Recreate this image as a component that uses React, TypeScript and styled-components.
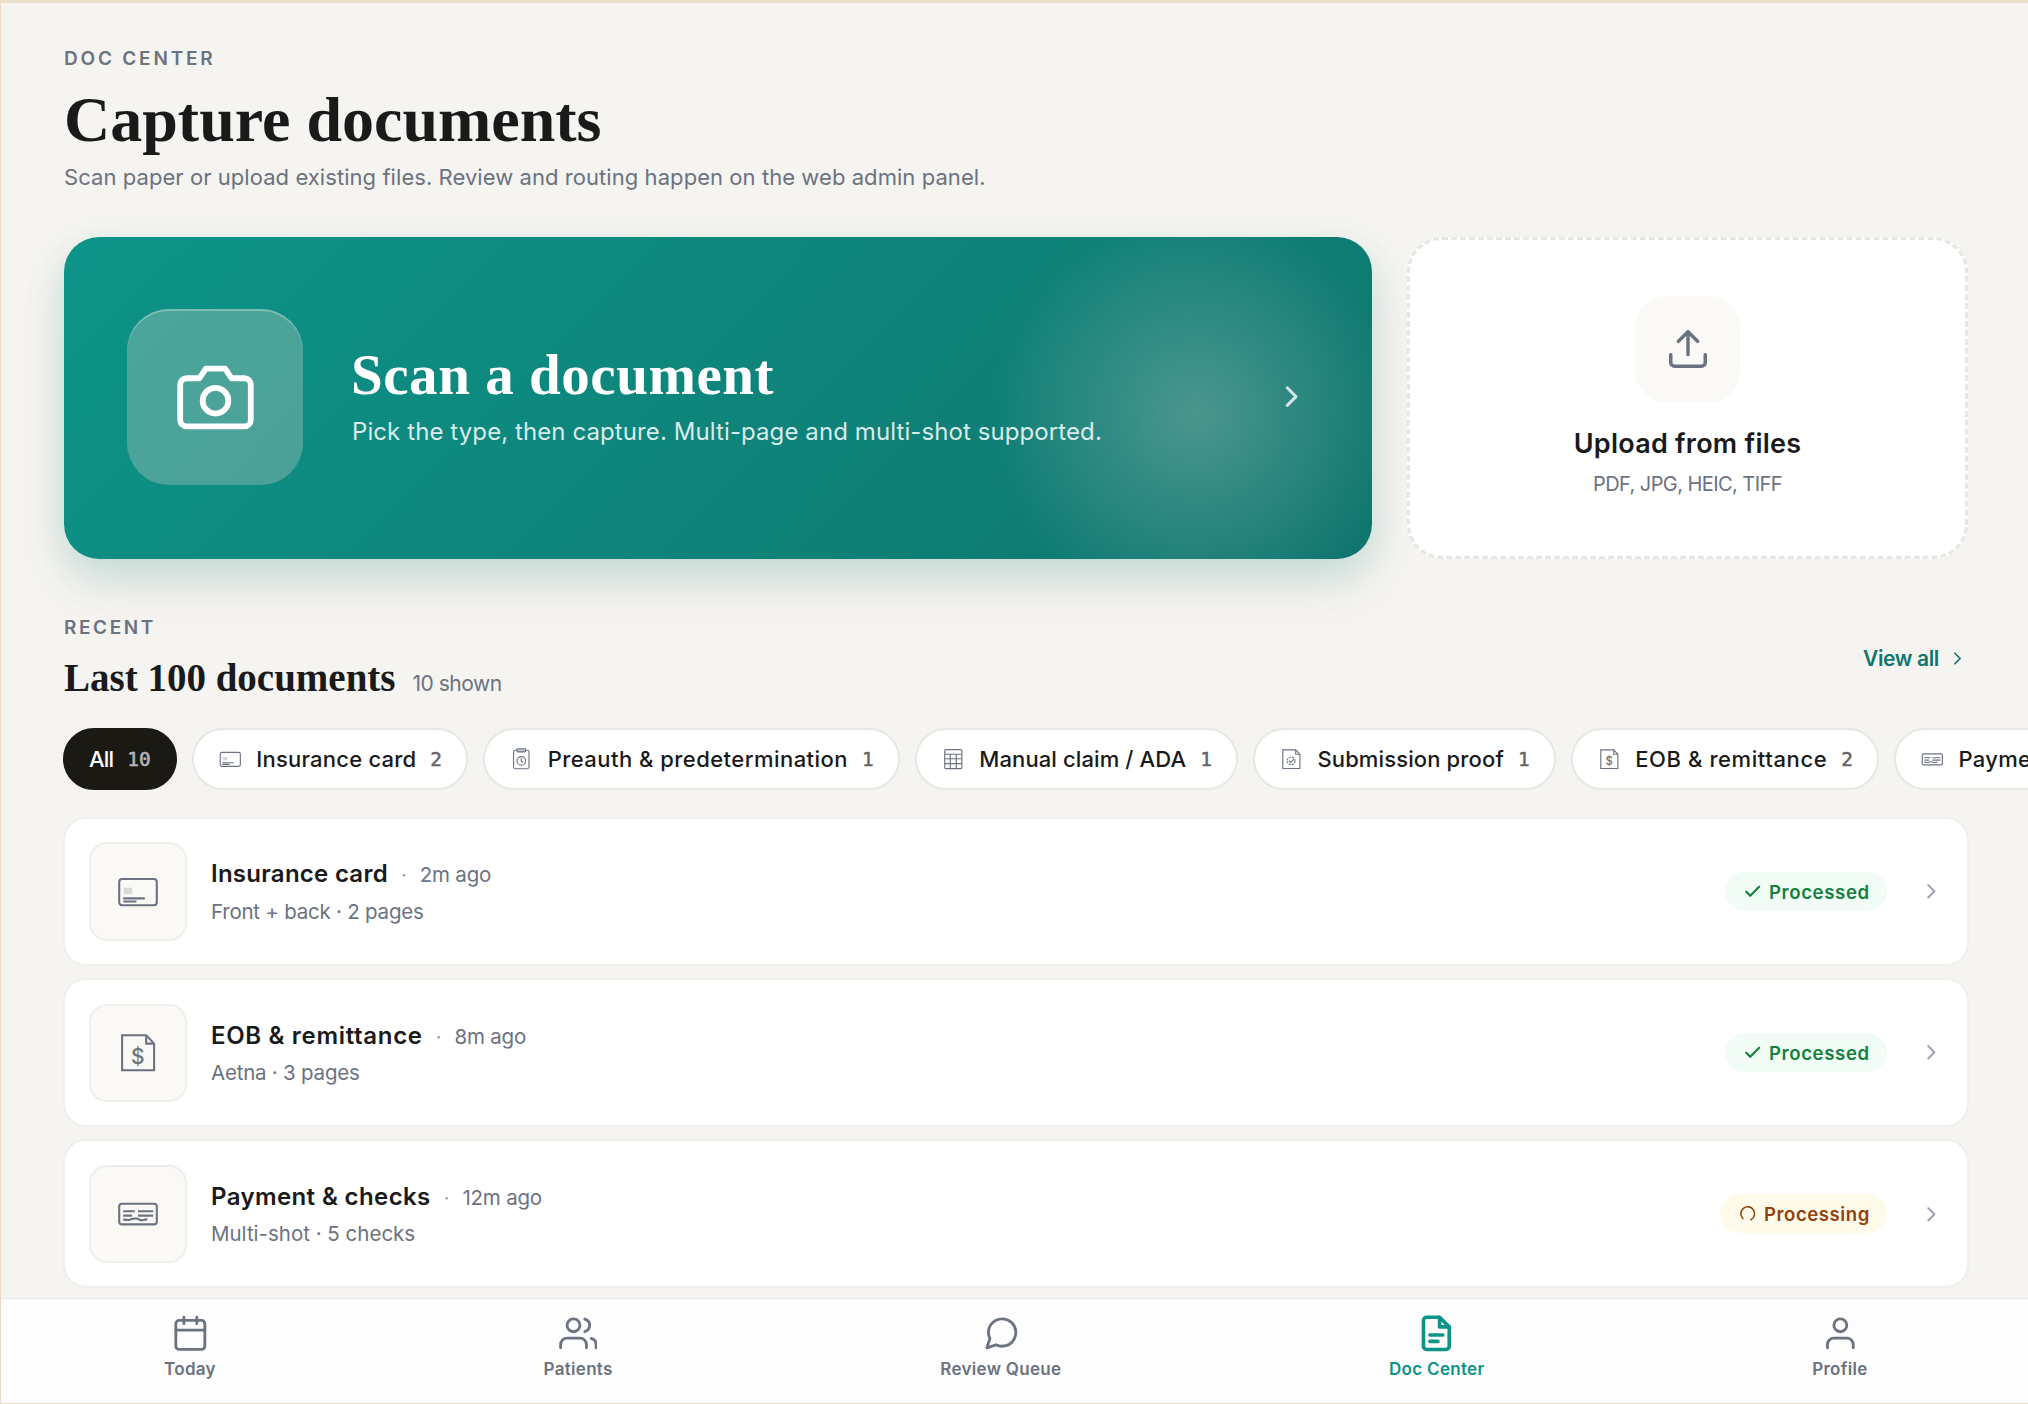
import React from "react";
import styled, { createGlobalStyle, css } from "styled-components";

const GlobalStyle = createGlobalStyle`
  *, *::before, *::after { box-sizing: border-box; }
  body { margin: 0; background: #f5f4f0; }
  button { font: inherit; }
`;

const sans = `"Inter", "Liberation Sans", sans-serif`;
const serif = `"Liberation Serif", serif`;
const mono = `"DejaVu Sans Mono", "Liberation Mono", monospace`;

const ink = "#1a1a1a";
const muted = "#6b7280";
const faint = "#9ca3af";

/* ---------- icons ---------- */

const Stroke = styled.svg<{ $size: number; $weight: number; $color?: string }>`
  display: block;
  flex: none;
  width: ${(p) => p.$size}px;
  height: ${(p) => p.$size}px;
  fill: none;
  stroke: ${(p) => p.$color ?? "currentColor"};
  stroke-width: ${(p) => p.$weight};
  stroke-linecap: round;
  stroke-linejoin: round;
`;

type IconProps = { size: number; weight: number; color?: string };

function Icon({ size, weight, color, children }: IconProps & { children: React.ReactNode }) {
  return (
    <Stroke viewBox="0 0 24 24" $size={size} $weight={weight} $color={color} aria-hidden>
      {children}
    </Stroke>
  );
}

const CameraIcon = (p: IconProps) => (
  <Icon {...p}>
    <path d="M23 19a2 2 0 0 1-2 2H3a2 2 0 0 1-2-2V8a2 2 0 0 1 2-2h4l2-3h6l2 3h4a2 2 0 0 1 2 2z" />
    <circle cx="12" cy="13" r="4" />
  </Icon>
);
const UploadIcon = (p: IconProps) => (
  <Icon {...p}>
    <path d="M21 15v4a2 2 0 0 1-2 2H5a2 2 0 0 1-2-2v-4M17 8l-5-5-5 5M12 3v12" />
  </Icon>
);
const ChevronIcon = (p: IconProps) => (
  <Icon {...p}>
    <path d="M9 18l6-6-6-6" />
  </Icon>
);
const CheckIcon = (p: IconProps) => (
  <Icon {...p}>
    <path d="M20 6L9 17l-5-5" />
  </Icon>
);
const SpinnerIcon = (p: IconProps) => (
  <Icon {...p}>
    <path d="M6 18A8.5 8.5 0 1 1 16 19.5" />
  </Icon>
);
const CalendarIcon = (p: IconProps) => (
  <Icon {...p}>
    <rect x="3" y="4" width="18" height="18" rx="2" />
    <path d="M16 2v4M8 2v4M3 10h18" />
  </Icon>
);
const PeopleIcon = (p: IconProps) => (
  <Icon {...p}>
    <path d="M17 21v-2a4 4 0 0 0-4-4H5a4 4 0 0 0-4 4v2" />
    <circle cx="9" cy="7" r="4" />
    <path d="M23 21v-2a4 4 0 0 0-3-3.87M16 3.13a4 4 0 0 1 0 7.75" />
  </Icon>
);
const ChatIcon = (p: IconProps) => (
  <Icon {...p}>
    <path d="M21 11.5a8.38 8.38 0 0 1-.9 3.8 8.5 8.5 0 0 1-7.6 4.7 8.38 8.38 0 0 1-3.8-.9L3 21l1.9-5.7a8.38 8.38 0 0 1-.9-3.8 8.5 8.5 0 0 1 4.7-7.6 8.38 8.38 0 0 1 3.8-.9h.5a8.48 8.48 0 0 1 8 8z" />
  </Icon>
);
const FileIcon = (p: IconProps) => (
  <Icon {...p}>
    <path d="M14 2H6a2 2 0 0 0-2 2v16a2 2 0 0 0 2 2h12a2 2 0 0 0 2-2V8z" />
    <path d="M14 2v6h6M8 13h8M8 17h5" />
  </Icon>
);
const PersonIcon = (p: IconProps) => (
  <Icon {...p}>
    <path d="M20 21v-2a4 4 0 0 0-4-4H8a4 4 0 0 0-4 4v2" />
    <circle cx="12" cy="7" r="4" />
  </Icon>
);

/* Document type glyphs, drawn on a 46 unit grid */

type Kind = "card" | "clipboard" | "form" | "proof" | "eob" | "check";

const Glyph = styled.svg<{ $size: number }>`
  display: block;
  flex: none;
  width: ${(p) => p.$size}px;
  height: ${(p) => p.$size}px;
  fill: none;
  stroke: ${muted};
  stroke-width: 2.1;
`;

const GlyphText = styled.text`
  font: 500 21px ${sans};
  fill: ${muted};
  stroke: none;
  text-anchor: middle;
`;

const page = (
  <>
    <path d="M7.1 5.3H31.2L39.1 13.6V40.2H7.1Z" />
    <path d="M31.2 5.3V13.6H39.1" />
  </>
);

const glyphs: Record<Kind, React.ReactNode> = {
  card: (
    <>
      <rect x="4.2" y="10" width="37.6" height="26.3" rx="3" />
      <rect x="8.8" y="18.7" width="8.4" height="6.4" fill="#d9d9d9" stroke="none" />
      <path d="M8.2 29.4H29.8M8.2 32.5H21.4" />
    </>
  ),
  clipboard: (
    <>
      <rect x="8.6" y="6" width="28.8" height="34.6" rx="3" />
      <rect x="15" y="3.2" width="16" height="6" rx="1.5" fill="#c3c6cc" />
      <circle cx="23" cy="26" r="8" />
      <path d="M23 21V26.4L26.6 29" />
    </>
  ),
  form: (
    <>
      <rect x="7" y="4.9" width="32" height="35.6" rx="2" />
      <path d="M7 13.6H39M7 22H39M7 31H39M17.4 13.6V40.5M28.6 13.6V40.5" />
    </>
  ),
  proof: (
    <>
      {page}
      <circle cx="22.6" cy="26" r="7.2" strokeDasharray="4 1.8" />
      <path d="M18.8 26.2L21.8 28.8L27.4 23" />
    </>
  ),
  eob: (
    <>
      {page}
      <GlyphText x="22.8" y="33.6">$</GlyphText>
    </>
  ),
  check: (
    <>
      <rect x="4.2" y="12.8" width="37.6" height="20.6" rx="2.6" />
      <path d="M8.2 20.2H19.8M8.2 24.6H17M23 20.2H38.2M23 24.6H38.2" />
      <path d="M8.2 28.8C10.5 28.2 12 29.6 14.2 28.9S19 27 21.6 27.6S26 29.8 28.4 29S31 28.2 32.4 28.4" />
    </>
  ),
};

function KindGlyph({ kind, size }: { kind: Kind; size: number }) {
  return (
    <Glyph viewBox="0 0 46 46" $size={size} aria-hidden>
      {glyphs[kind]}
    </Glyph>
  );
}

/* ---------- page frame ---------- */

const Screen = styled.div`
  display: flex;
  flex-direction: column;
  width: 2028px;
  height: 1404px;
  overflow: hidden;
  background: #f5f4f0;
  border-top: 3px solid #e9dfcb;
  border-left: 1px solid #ecdac5;
  border-bottom: 1px solid #e6dac4;
  font-family: ${sans};
  color: ${ink};
  white-space: nowrap;
`;

const Content = styled.main`
  flex: 1;
  min-height: 0;
  overflow: hidden;
  padding: 44px 60px 0 63px;
`;

const Eyebrow = styled.div<{ $track: number }>`
  font-size: 19px;
  line-height: 24px;
  font-weight: 600;
  letter-spacing: ${(p) => p.$track}px;
  color: ${muted};
`;

const Title = styled.h1`
  margin: 14px 0 8px;
  font: 700 64px/70px ${serif};
`;

const Subtitle = styled.p`
  margin: 0;
  font-size: 22px;
  line-height: 28px;
  letter-spacing: 0.06px;
  color: ${muted};
`;

/* ---------- capture actions ---------- */

const Actions = styled.section`
  display: grid;
  grid-template-columns: 1fr 561px;
  gap: 35px;
  height: 322px;
  margin-top: 46px;
`;

const ScanCard = styled.div`
  display: flex;
  align-items: center;
  padding: 0 63px 2px;
  border-radius: 35px;
  color: #fff;
  background:
    radial-gradient(circle 205px at 1132px 177px, rgba(255, 228, 222, 0.25), rgba(255, 228, 222, 0)),
    linear-gradient(135deg, #0d9488, #0f766e);
  box-shadow:
    0 15px 38px rgba(13, 148, 136, 0.18),
    0 28px 60px rgba(26, 26, 46, 0.05);
`;

const ScanTile = styled.div`
  display: grid;
  place-items: center;
  width: 176px;
  height: 176px;
  border-radius: 42px;
  background: rgba(255, 224, 218, 0.26);
  box-shadow: inset 0 2px 0 rgba(255, 255, 255, 0.28);
`;

const ScanText = styled.div`
  flex: 1;
  margin-left: 48px;
  padding-bottom: 1px;
`;

const ScanTitle = styled.div`
  font: 700 57px/60px ${serif};
  letter-spacing: 0.55px;
`;

const ScanHint = styled.div`
  margin: 10.5px 0 0 1px;
  font-size: 24px;
  line-height: 32px;
  letter-spacing: 0.09px;
  color: rgba(255, 255, 255, 0.85);
`;

const UploadCard = styled.div`
  display: flex;
  flex-direction: column;
  align-items: center;
  justify-content: center;
  padding-bottom: 2.6px;
  border: 3px dashed #e7e6e2;
  border-radius: 35px;
  background: #fff;
`;

const UploadTile = styled.div`
  display: grid;
  place-items: center;
  width: 105.6px;
  height: 105.6px;
  border-radius: 31px;
  background: #faf9f6;
`;

const UploadTitle = styled.div`
  margin-top: 25.5px;
  font-size: 27px;
  line-height: 34px;
  font-weight: 600;
  letter-spacing: 0.25px;
`;

const UploadHint = styled.div`
  margin-top: 9.6px;
  font-size: 20px;
  line-height: 26px;
  letter-spacing: -0.56px;
  color: ${muted};
`;

/* ---------- recent documents ---------- */

const RecentHeader = styled.header`
  display: flex;
  align-items: center;
  justify-content: space-between;
  margin-top: 57px;
`;

const RecentTitleLine = styled.div`
  display: flex;
  align-items: baseline;
  gap: 17px;
  height: 44px;
  margin-top: 16.4px;
`;

const RecentTitle = styled.h2`
  margin: 0;
  font: 700 39px/44px ${serif};
`;

const Shown = styled.span`
  font-size: 21px;
  letter-spacing: -0.5px;
  color: ${muted};
`;

const ViewAll = styled.a`
  display: flex;
  align-items: center;
  gap: 8px;
  font-size: 21px;
  font-weight: 600;
  letter-spacing: -0.35px;
  color: #0f766e;
`;

const Filters = styled.div`
  display: flex;
  gap: 15px;
  margin: 28px -60px 0 -1px;
  overflow: hidden;
`;

const Pill = styled.button<{ $active?: boolean }>`
  display: flex;
  flex: none;
  align-items: center;
  gap: 14px;
  height: 61.5px;
  padding: 0 24px;
  border: 2px solid #e8e7e3;
  border-radius: 31px;
  background: #fff;
  color: ${ink};
  ${(p) =>
    p.$active &&
    css`
      border-color: #1a1914;
      background: #1a1914;
      color: #fff;
    `}
`;

const PillLabel = styled.span<{ $track: number }>`
  font-size: 22px;
  font-weight: 450;
  letter-spacing: ${(p) => p.$track}px;
`;

const PillCount = styled.span`
  font-family: ${mono};
  font-size: 19.4px;
  -webkit-text-stroke: 0.5px currentColor;
  opacity: 0.68;
`;

const List = styled.div`
  display: flex;
  flex-direction: column;
  gap: 12.2px;
  margin: 27.2px -0.8px 0 -0.6px;
`;

const Row = styled.article`
  display: flex;
  align-items: center;
  height: 149px;
  padding: 0 23.4px 0 23.4px;
  border: 2px solid #f0efeb;
  border-radius: 23px;
  background: #fff;
`;

const RowTile = styled.div`
  display: grid;
  flex: none;
  place-items: center;
  width: 98.4px;
  height: 98.4px;
  border: 2px solid #f0efeb;
  border-radius: 18px;
  background: #faf9f6;
`;

const RowText = styled.div`
  flex: 1;
  margin-left: 23.8px;
  padding-top: 1px;
`;

const RowHead = styled.div`
  display: flex;
  align-items: baseline;
  gap: 13px;
  line-height: 32px;
`;

const RowTitle = styled.span<{ $track: number }>`
  font-size: 24px;
  font-weight: 600;
  letter-spacing: ${(p) => p.$track}px;
`;

const Dot = styled.span`
  font-size: 20px;
  color: ${faint};
`;

const RowTime = styled.span`
  font-size: 20.5px;
  letter-spacing: -0.2px;
  color: ${muted};
`;

const RowDetail = styled.div<{ $track: number }>`
  margin-top: 6.5px;
  font-size: 20.5px;
  line-height: 28px;
  letter-spacing: ${(p) => p.$track}px;
  color: ${muted};
`;

const Badge = styled.span<{ $busy: boolean }>`
  display: flex;
  align-items: center;
  gap: 7px;
  height: 39px;
  margin-right: 31.4px;
  padding: 0 17.6px;
  border-radius: 20px;
  font-size: 18.6px;
  font-weight: 600;
  letter-spacing: ${(p) => (p.$busy ? 0.54 : 0.64)}px;
  color: ${(p) => (p.$busy ? "#92400e" : "#15803d")};
  background: ${(p) => (p.$busy ? "#fffbeb" : "#f0fcf5")};
`;

/* ---------- bottom navigation ---------- */

const Nav = styled.nav`
  display: flex;
  flex: none;
  justify-content: space-around;
  height: 105.5px;
  padding-top: 15px;
  margin: 0 -3.5px 0 -0.8px;
  border-top: 1px solid #eae9e5;
  background: #fdfdfd;
`;

const NavItem = styled.a<{ $active?: boolean }>`
  display: flex;
  flex-direction: column;
  align-items: center;
  gap: 6px;
  color: ${(p) => (p.$active ? "#0d9488" : muted)};
`;

const NavLabel = styled.span`
  font-size: 17px;
  line-height: 22px;
  font-weight: 600;
  letter-spacing: 0.3px;
`;

/* ---------- data ---------- */

const filters: { label: string; count: number; kind?: Kind; track: number }[] = [
  { label: "All", count: 10, track: -0.8 },
  { label: "Insurance card", count: 2, kind: "card", track: 0.22 },
  { label: "Preauth & predetermination", count: 1, kind: "clipboard", track: 0.46 },
  { label: "Manual claim / ADA", count: 1, kind: "form", track: 0.11 },
  { label: "Submission proof", count: 1, kind: "proof", track: 0.13 },
  { label: "EOB & remittance", count: 2, kind: "eob", track: 0.59 },
  { label: "Payment & checks", count: 2, kind: "check", track: 0.3 },
];

const documents: {
  title: string; track: number; time: string; detail: string; detailTrack: number; kind: Kind; busy: boolean;
}[] = [
  { title: "Insurance card", track: 0.27, time: "2m ago", detail: "Front + back · 2 pages", detailTrack: -0.23, kind: "card", busy: false },
  { title: "EOB & remittance", track: 0.68, time: "8m ago", detail: "Aetna · 3 pages", detailTrack: -0.22, kind: "eob", busy: false },
  { title: "Payment & checks", track: 0.39, time: "12m ago", detail: "Multi-shot · 5 checks", detailTrack: 0, kind: "check", busy: true },
];

const tabs: { label: string; Glyph: React.FC<IconProps>; active?: boolean }[] = [
  { label: "Today", Glyph: CalendarIcon },
  { label: "Patients", Glyph: PeopleIcon },
  { label: "Review Queue", Glyph: ChatIcon },
  { label: "Doc Center", Glyph: FileIcon, active: true },
  { label: "Profile", Glyph: PersonIcon },
];

export default function App() {
  return (
    <Screen>
      <GlobalStyle />
      <Content>
        <Eyebrow $track={2.8}>DOC CENTER</Eyebrow>
        <Title>Capture documents</Title>
        <Subtitle>Scan paper or upload existing files. Review and routing happen on the web admin panel.</Subtitle>

        <Actions>
          <ScanCard>
            <ScanTile>
              <CameraIcon size={77} weight={1.8} />
            </ScanTile>
            <ScanText>
              <ScanTitle>Scan a document</ScanTitle>
              <ScanHint>Pick the type, then capture. Multi-page and multi-shot supported.</ScanHint>
            </ScanText>
            <ChevronIcon size={35.2} weight={2} color="rgba(255,255,255,0.8)" />
          </ScanCard>
          <UploadCard>
            <UploadTile>
              <UploadIcon size={46} weight={1.8} color={muted} />
            </UploadTile>
            <UploadTitle>Upload from files</UploadTitle>
            <UploadHint>PDF, JPG, HEIC, TIFF</UploadHint>
          </UploadCard>
        </Actions>

        <RecentHeader>
          <div>
            <Eyebrow $track={2.6}>RECENT</Eyebrow>
            <RecentTitleLine>
              <RecentTitle>Last 100 documents</RecentTitle>
              <Shown>10 shown</Shown>
            </RecentTitleLine>
          </div>
          <ViewAll>
            View all
            <ChevronIcon size={21} weight={2} />
          </ViewAll>
        </RecentHeader>

        <Filters>
          {filters.map((f) => (
            <Pill key={f.label} $active={!f.kind}>
              {f.kind && <KindGlyph kind={f.kind} size={24.6} />}
              <PillLabel $track={f.track}>{f.label}</PillLabel>
              <PillCount>{f.count}</PillCount>
            </Pill>
          ))}
        </Filters>

        <List>
          {documents.map((d) => (
            <Row key={d.title}>
              <RowTile>
                <KindGlyph kind={d.kind} size={46} />
              </RowTile>
              <RowText>
                <RowHead>
                  <RowTitle $track={d.track}>{d.title}</RowTitle>
                  <Dot>·</Dot>
                  <RowTime>{d.time}</RowTime>
                </RowHead>
                <RowDetail $track={d.detailTrack}>{d.detail}</RowDetail>
              </RowText>
              <Badge $busy={d.busy}>
                {d.busy ? <SpinnerIcon size={19.4} weight={2} /> : <CheckIcon size={19.4} weight={2.7} />}
                {d.busy ? "Processing" : "Processed"}
              </Badge>
              <ChevronIcon size={24.6} weight={2} color={faint} />
            </Row>
          ))}
        </List>
      </Content>

      <Nav>
        {tabs.map(({ label, Glyph: TabIcon, active }) => (
          <NavItem key={label} $active={active}>
            <TabIcon size={38.7} weight={active ? 2.25 : 1.75} />
            <NavLabel>{label}</NavLabel>
          </NavItem>
        ))}
      </Nav>
    </Screen>
  );
}
